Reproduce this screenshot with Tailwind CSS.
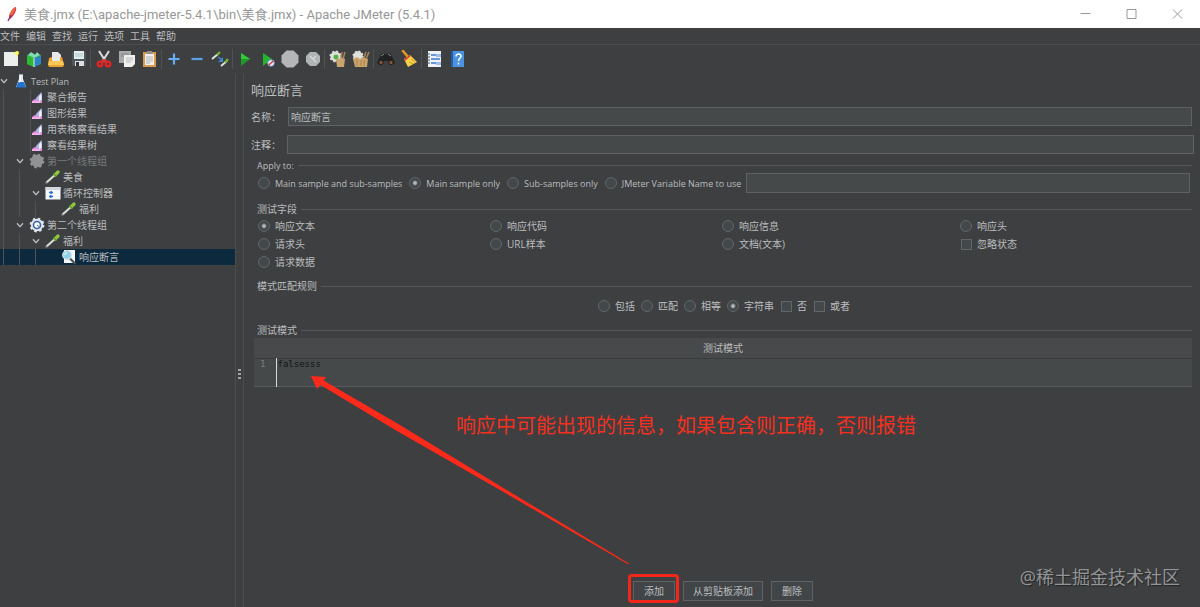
<!DOCTYPE html>
<html lang="zh">
<head>
<meta charset="utf-8">
<title>美食.jmx - Apache JMeter (5.4.1)</title>
<script src="https://cdn.jsdelivr.net/npm/@tailwindcss/browser@4"></script>
</head>
<body class="bg-[#3d3f41]">
<svg class="hidden">
  <symbol id="chev" viewBox="0 0 8 8"><path d="M1 2.2 4 5.6 7 2.2" fill="none" stroke="#b4b7b9" stroke-width="1.4"/></symbol>
  <symbol id="chart" viewBox="0 0 16 16"><path d="M1.5 0v16" stroke="#505355"/><path d="M3 14v-2l3-2 3-1 4-3v8z" fill="#e58fdc"/><path d="M7 9 12.500 3v8L9 13z" fill="#a9b6ec"/><path d="M10 8l2.500-4v7L10 12z" fill="#eef4ff"/><path d="M3 12.500h8V14H3z" fill="#fbb5ee"/></symbol>
  <symbol id="flask" viewBox="0 0 16 16"><path d="M6 2h4v4l3 8H3l3-8z" fill="#dfe9f2"/><path d="M5.2 9h5.6L13 14.5H3z" fill="#2173cf"/><path d="M7 3h1v5l-2 2z" fill="#fff"/><path d="M6 1.5h4" stroke="#9aabbb"/></symbol>
  <symbol id="gear" viewBox="0 0 16 16"><circle cx="8" cy="8" r="6.2" fill="currentColor" stroke="currentColor" stroke-width="2.4" stroke-dasharray="2.4 2.47"/><circle cx="8" cy="8" r="5.8" fill="currentColor"/></symbol>
  <symbol id="pipette" viewBox="0 0 16 16"><path d="M1.500 13.500 9.500 6.500" stroke="#848c86" stroke-width="2.400" stroke-linecap="round"/><path d="M2 13 9.500 6.300" stroke="#eef1ea" stroke-width="1.300"/><path d="M10 6 13 3" stroke="#8cc63a" stroke-width="3.400" stroke-linecap="round"/><path d="M8.500 4.500l3 3" stroke="#5d8a38" stroke-width="1"/></symbol>
  <symbol id="loop" viewBox="0 0 16 16"><path d="M.5 2h15v12.500H.5z" fill="#f5f7fa"/><path d="M.5 2h15v3H.5z" fill="#d3d8de"/><path d="M4 7.500h4M4 11.500h4" stroke="#2671d8" stroke-width="1.500"/><path d="M7 5.800v3.500L4 7.500zM5 9.700v3.500l3-1.700z" fill="#2671d8"/></symbol>
  <symbol id="assert" viewBox="0 0 16 16"><path d="M3 1h11v13H3z" fill="#f4f7fa"/><path d="M9 9.500 14.500 15" stroke="#4b5157" stroke-width="2.200"/><circle cx="6" cy="6" r="4.300" fill="#8fd2e6" stroke="#d4dde3" stroke-width="1.200"/><path d="M3.800 6a2.400 2.400 0 0 1 2-2.400" stroke="#fff" fill="none"/></symbol>
</svg>
<div class="relative flex min-h-screen flex-col overflow-hidden bg-[#3d3f41] font-['Open_Sans','Noto_Sans_CJK_SC',sans-serif] text-[10px] leading-none text-[#bbbdbf]">

  <header class="flex h-[28px] items-center bg-white text-[#979797]">
    <svg class="ml-1 h-4 w-4" viewBox="0 0 16 16"><path d="M12 1c1 3-2 9-6 12l-1-1C5 8 8 2 12 1z" fill="#d22a4c"/><path d="M12 1c-1 4-3 8-6.500 11.500L5 10C6 6 9 2 12 1z" fill="#f0683c"/><path d="M7 9 4 15" stroke="#7d2a74" stroke-width="1.200"/></svg>
    <h1 class="ml-1 flex-1 font-['Roboto','Noto_Sans_CJK_SC',sans-serif] text-[13px] whitespace-pre">美食.jmx (E:\apache-jmeter-5.4.1\bin\美食.jmx) - Apache JMeter (5.4.1)</h1>
    <button class="flex w-[46px] justify-center" aria-label="Minimize"><svg class="h-[11px] w-[11px]" viewBox="0 0 11 11"><path d="M.5 4.500h10" stroke="#999"/></svg></button>
    <button class="flex w-[46px] justify-center" aria-label="Maximize"><svg class="h-[11px] w-[11px]" viewBox="0 0 11 11"><path d="M1 .5h9v9H1z" fill="none" stroke="#999"/></svg></button>
    <button class="flex w-[46px] justify-center" aria-label="Close"><svg class="h-[11px] w-[11px]" viewBox="0 0 11 11"><path d="M1 .5l9 9M10 .5l-9 9" stroke="#999"/></svg></button>
  </header>

  <nav class="flex h-[17px] items-center gap-[6px] border-b border-[#4a4c4e]">
    <button>文件</button><button>编辑</button><button>查找</button><button>运行</button><button>选项</button><button>工具</button><button>帮助</button>
  </nav>

  <div class="flex h-[28px] shrink-0 items-center" role="toolbar">
    <div class="flex h-5 w-[91px] items-center border-r border-[#4f5254]">
      <button class="flex flex-1 justify-center" aria-label="New"><svg class="h-[18px] w-[18px]" viewBox="0 0 18 18"><path d="M2 2h14v14H2z" fill="#eceded"/><path d="M11 2h5v5z" fill="#f3f08a"/><circle cx="15" cy="3" r="2" fill="#fbf75a"/></svg></button>
      <button class="flex flex-1 justify-center" aria-label="Templates"><svg class="h-[18px] w-[18px]" viewBox="0 0 18 18"><path d="M2 5l6-1.500L16 5v9l-7 3-7-3z" fill="#38a83c"/><path d="M9 8l7-2v8l-7 3z" fill="#2b84c8"/><path d="M2 5l7 3v9l-7-3z" fill="#2fba35"/><path d="M3 5 6 2l4 3 2-3 3 3-6 3z" fill="#86dbbf"/><path d="M9 8v9" stroke="#d8f4e4"/></svg></button>
      <button class="flex flex-1 justify-center" aria-label="Open"><svg class="h-[18px] w-[18px]" viewBox="0 0 18 18"><path d="M5 2h6l3 3v7H5z" fill="#e8e8e6"/><path d="M2 8l3-1v4h8V7h2l2 8-1 2H2l-1-2z" fill="#e9a22e"/><path d="M2 11h14l1 4H1z" fill="#fac654"/></svg></button>
      <button class="flex flex-1 justify-center" aria-label="Save"><svg class="h-[18px] w-[18px]" viewBox="0 0 18 18"><path d="M2 2h14v14H3l-1-1z" fill="#4d555d"/><path d="M4 1h10v8H4z" fill="#e5ecec"/><path d="M5 4h8M5 6h8" stroke="#a9c6c9"/><path d="M5 11h9v5H5z" fill="#dedfe0"/><path d="M6 12h3v4H6z" fill="#30363b"/></svg></button>
    </div>
    <div class="flex h-5 w-[71px] items-center border-r border-[#4f5254] pl-[1px]">
      <button class="flex flex-1 justify-center" aria-label="Cut"><svg class="h-[18px] w-[18px]" viewBox="0 0 18 18"><path d="M4 1l7 11M14 1 7 12" stroke="#dcdfe1" stroke-width="2"/><circle cx="5" cy="14" r="2.300" fill="none" stroke="#e02424" stroke-width="2.400"/><circle cx="13" cy="14" r="2.300" fill="none" stroke="#e02424" stroke-width="2.400"/><path d="M6 12l3-2 3 2" stroke="#e02424" stroke-width="2" fill="none"/></svg></button>
      <button class="flex flex-1 justify-center" aria-label="Copy"><svg class="h-[18px] w-[18px]" viewBox="0 0 18 18"><path d="M1 1h12v12H1z" fill="#a7aaaa"/><path d="M3 4h8M3 6h4" stroke="#85898b"/><path d="M6 5h11v9l-3 3H6z" fill="#efefee"/><path d="M8 8h7M8 10h7M8 12h5" stroke="#b8bbbc"/></svg></button>
      <button class="flex flex-1 justify-center" aria-label="Paste"><svg class="h-[18px] w-[18px]" viewBox="0 0 18 18"><path d="M2 2h13v15H2z" fill="#d89a4c"/><path d="M4 4h9v11H4z" fill="#f1f0ec"/><path d="M6 1h5v3H6z" fill="#8d9296"/><path d="M5 7h7M5 9h7M5 11h7M5 13h4" stroke="#aeb3b6"/></svg></button>
    </div>
    <div class="flex h-5 w-[71px] items-center border-r border-[#4f5254]">
      <button class="flex flex-1 justify-center" aria-label="Expand all"><svg class="h-[18px] w-[18px]" viewBox="0 0 18 18"><path d="M9 3.500v11M3.500 9h11" stroke="#67adf4" stroke-width="2.200"/></svg></button>
      <button class="flex flex-1 justify-center" aria-label="Collapse all"><svg class="h-[18px] w-[18px]" viewBox="0 0 18 18"><path d="M3.500 9h11" stroke="#5b9fe6" stroke-width="2.200"/></svg></button>
      <button class="flex flex-1 justify-center" aria-label="Toggle"><svg class="h-[18px] w-[18px]" viewBox="0 0 18 18"><path d="M1 9 7 4M10 16l6-5" stroke="#dce2dc" stroke-width="2"/><path d="M6 5l3-3M14 12.500l3-3.500" stroke="#76b72c" stroke-width="2.200"/><path d="M7 7l4 3" stroke="#3f87cf" stroke-width="1.500"/><path d="M12 7v5H7z" fill="#3f87cf"/></svg></button>
    </div>
    <div class="flex h-5 w-[92px] items-center border-r border-[#4f5254] pl-[1px]">
      <button class="flex flex-1 justify-center" aria-label="Start"><svg class="h-[18px] w-[18px]" viewBox="0 0 18 18"><path d="M5 3l9 6-9 7z" fill="#1b9c28"/><path d="M5 3l9 6H5z" fill="#35c63b"/></svg></button>
      <button class="flex flex-1 justify-center" aria-label="Start no pauses"><svg class="h-[18px] w-[18px]" viewBox="0 0 18 18"><path d="M4 3l9 6-9 7z" fill="#23b52e"/><circle cx="12" cy="13" r="3.300" fill="#eef1f8" stroke="#6f8fc8"/><path d="M9.800 15l4.400-4" stroke="#d1333c" stroke-width="1.500"/></svg></button>
      <button class="flex flex-1 justify-center" aria-label="Stop"><svg class="h-[18px] w-[18px]" viewBox="0 0 18 18"><path d="M5.500.500h7l5 5v7l-5 5h-7l-5-5v-7z" fill="#b4b6b7"/></svg></button>
      <button class="flex flex-1 justify-center" aria-label="Shutdown"><svg class="h-[18px] w-[18px]" viewBox="0 0 18 18"><path d="M6 2h6l4 4v6l-4 4H6l-4-4V6z" fill="#b1b4b4"/><path d="M6 6l6 6M12 6l-3 3" stroke="#d6d8d8" stroke-width="1.500"/></svg></button>
    </div>
    <div class="flex h-5 w-[49px] items-center border-r border-[#4f5254] pl-[1px]">
      <button class="flex flex-1 justify-center" aria-label="Clear"><svg class="h-[18px] w-[18px] text-[#dfe0dc]" viewBox="0 0 18 18"><use href="#gear" x="0" y="0" width="13" height="13"/><circle cx="7" cy="7" r="2.500" fill="#58b04b"/><path d="M7 9h4l2-2 3 2-1 8H8z" fill="#c8a46e"/><path d="M12 8l1-6M14 9l2-7" stroke="#a88654" stroke-width="1.500"/></svg></button>
      <button class="flex flex-1 justify-center" aria-label="Clear all"><svg class="h-[18px] w-[18px] text-[#dfe0dc]" viewBox="0 0 18 18"><use href="#gear" x="0" y="0" width="12" height="12"/><path d="M1 9l4-2 3 2 3-2 5 2-1 8H3z" fill="#cba36a"/><path d="M5 10v6M9 10v6M12 10v6" stroke="#a98450"/><path d="M12 8l2-6M14 9l3-7" stroke="#a88654" stroke-width="1.500"/></svg></button>
    </div>
    <div class="flex h-5 w-[48px] items-center border-r border-[#4f5254]">
      <button class="flex flex-1 justify-center" aria-label="Search"><svg class="h-[18px] w-[18px]" viewBox="0 0 18 18"><path d="M4 4l3-1 2 2 2-2 3 1 4 9-3 2-4-4H7l-4 4-3-2z" fill="#1f2123"/><circle cx="4" cy="12.500" r="2.200" fill="#8c5238" stroke="#1f2123"/><circle cx="14" cy="12.500" r="2.200" fill="#8c5238" stroke="#1f2123"/><path d="M4 6l3-2M11 4l3 2" stroke="#8b8f92"/></svg></button>
      <button class="flex flex-1 justify-center" aria-label="Reset search"><svg class="h-[18px] w-[18px]" viewBox="0 0 18 18"><path d="M3 1l5 6" stroke="#e19a25" stroke-width="2.600" stroke-linecap="round"/><path d="M4 9l6-4 7 7-9 5z" fill="#f6d14a"/><path d="M4 9l6-4 1 1-6 5z" fill="#d8452d"/><path d="M9 12l4 2M11 9l4 3" stroke="#c99a26"/></svg></button>
    </div>
    <div class="flex h-5 w-[46px] items-center pl-[1px]">
      <button class="flex flex-1 justify-center" aria-label="Functions"><svg class="h-[18px] w-[18px]" viewBox="0 0 18 18"><path d="M3 1h13v16H3z" fill="#eef2f7"/><path d="M6 5h9M6 9h9M6 13h9" stroke="#3e78c9" stroke-width="1.500"/><path d="M11 4h5v3h-5zM11 12h5v3h-5z" fill="#9dbde8"/><path d="M1 4h4M1 7h4M1 10h4M1 13h4" stroke="#52575b"/></svg></button>
      <button class="flex flex-1 justify-center" aria-label="Help"><svg class="h-[18px] w-[18px]" viewBox="0 0 18 18"><path d="M3 1h13v16H3z" fill="#4b93e0"/><path d="M3 1h2v16H3z" fill="#235fa5"/><path d="M8 6.500c0-3.500 5.500-3 5 0-.300 1.800-2.500 2-2.500 4.500M10.500 12.500v2" stroke="#fff" stroke-width="1.500" fill="none"/></svg></button>
    </div>
  </div>

  <div class="flex flex-1 items-stretch">
    <aside class="w-[236px] shrink-0 border-r border-[#4a4c4e]">
      <ul role="tree" class="[&>li]:flex [&>li]:h-4 [&>li]:items-center [&_i]:ml-[3px] [&_i]:h-4 [&_i]:w-[13px] [&_i]:shrink-0 [&_i]:border-l [&_i]:border-[#505355] [&_b]:w-2 [&_span]:ml-[2px]">
        <li role="treeitem"><svg class="h-2 w-2"><use href="#chev"/></svg><svg class="ml-[5px] h-4 w-4"><use href="#flask"/></svg><span class="text-[9px]">Test Plan</span></li>
        <li role="treeitem"><i></i><b></b><svg class="ml-[5px] h-4 w-4"><use href="#chart"/></svg><span>聚合报告</span></li>
        <li role="treeitem"><i></i><b></b><svg class="ml-[5px] h-4 w-4"><use href="#chart"/></svg><span>图形结果</span></li>
        <li role="treeitem"><i></i><b></b><svg class="ml-[5px] h-4 w-4"><use href="#chart"/></svg><span>用表格察看结果</span></li>
        <li role="treeitem"><i></i><b></b><svg class="ml-[5px] h-4 w-4"><use href="#chart"/></svg><span>察看结果树</span></li>
        <li role="treeitem"><i></i><svg class="h-2 w-2"><use href="#chev"/></svg><svg class="ml-[5px] h-4 w-4 text-[#909293]"><use href="#gear"/></svg><span class="text-[#777a7c]">第一个线程组</span></li>
        <li role="treeitem"><i></i><i></i><b></b><svg class="ml-[5px] h-4 w-4"><use href="#pipette"/></svg><span>美食</span></li>
        <li role="treeitem"><i></i><i></i><svg class="h-2 w-2"><use href="#chev"/></svg><svg class="ml-[5px] h-4 w-4"><use href="#loop"/></svg><span>循环控制器</span></li>
        <li role="treeitem"><i></i><i></i><i></i><b></b><svg class="ml-[5px] h-4 w-4"><use href="#pipette"/></svg><span>福利</span></li>
        <li role="treeitem"><i></i><svg class="h-2 w-2"><use href="#chev"/></svg><svg class="ml-[5px] h-4 w-4 text-[#dfe5ec]" viewBox="0 0 16 16"><use href="#gear"/><circle cx="8" cy="8" r="3.500" fill="#fff" stroke="#3e64a8" stroke-width="1.600"/><path d="M8 8l2.500 2" stroke="#3e64a8"/></svg><span>第二个线程组</span></li>
        <li role="treeitem"><i></i><i></i><svg class="h-2 w-2"><use href="#chev"/></svg><svg class="ml-[5px] h-4 w-4"><use href="#pipette"/></svg><span>福利</span></li>
        <li role="treeitem" aria-selected="true" class="bg-[#0d293e]"><i></i><i></i><i></i><b></b><svg class="ml-[5px] h-4 w-4"><use href="#assert"/></svg><span>响应断言</span></li>
      </ul>
    </aside>
    <div class="flex w-2 shrink-0 items-center justify-center border-r border-[#4a4c4e] pt-[68px]" role="separator">
      <svg class="h-3 w-[3px]" viewBox="0 0 3 12"><path d="M0 1h3v2H0zM0 5h3v2H0zM0 9h3v2H0z" fill="#a2a4a6"/></svg>
    </div>

    <main class="flex min-w-0 flex-1 flex-col pr-2 pl-[7px] [&_input[type=checkbox]]:h-[11px] [&_input[type=checkbox]]:w-[11px] [&_input[type=checkbox]]:appearance-none [&_input[type=checkbox]]:border [&_input[type=checkbox]]:border-[#626668] [&_input[type=checkbox]]:bg-[#43494a] [&_input[type=radio]]:h-3 [&_input[type=radio]]:w-3 [&_input[type=radio]]:appearance-none [&_input[type=radio]]:rounded-full [&_input[type=radio]]:border [&_input[type=radio]]:border-[#626668] [&_input[type=radio]]:bg-[#43494a] [&_input:checked]:bg-[radial-gradient(circle,#b8babc_1px,#43494a_3px)] [&_label]:flex [&_label]:items-center [&_label]:gap-[5px] [&_label]:whitespace-nowrap">
      <h2 class="flex h-[34px] items-center text-[13px]">响应断言</h2>
      <div class="flex h-[19px] items-center">
        <label for="name" class="w-[37px]">名称：</label>
        <input id="name" type="text" value="响应断言" class="h-[19px] min-w-0 flex-1 border border-[#5f6264] bg-[#45494a] px-[2px]">
      </div>
      <div class="-mr-[2px] mt-[9px] flex h-[19px] items-center">
        <label for="comment" class="w-[36px]">注释：</label>
        <input id="comment" type="text" class="h-[19px] min-w-0 flex-1 border border-[#5f6264] bg-[#45494a] px-[2px]">
      </div>

      <section class="mt-1">
        <h3 class="flex h-[14px] items-center gap-1 pl-[6px] text-[9px]">Apply to:<span class="h-px flex-1 bg-[#55585a]"></span></h3>
        <div class="mt-px flex h-5 items-center gap-[7px] pr-[2px] pl-[7px] text-[9px]">
          <label><input type="radio" name="scope">Main sample and sub-samples</label>
          <label><input type="radio" name="scope" checked>Main sample only</label>
          <label><input type="radio" name="scope">Sub-samples only</label>
          <label><input type="radio" name="scope">JMeter Variable Name to use</label>
          <input type="text" aria-label="JMeter Variable Name" class="-ml-[2px] h-5 min-w-0 flex-1 border border-[#5f6264] bg-[#45494a]">
        </div>
      </section>

      <section class="mt-[9px]">
        <h3 class="flex h-[14px] items-center gap-1 pl-[6px]">测试字段<span class="h-px flex-1 bg-[#55585a]"></span></h3>
        <div class="mt-px grid auto-rows-[18px] grid-cols-[232fr_232fr_238fr_232fr] pl-[7px]">
          <label><input type="radio" name="field" checked>响应文本</label>
          <label><input type="radio" name="field">响应代码</label>
          <label><input type="radio" name="field">响应信息</label>
          <label><input type="radio" name="field">响应头</label>
          <label><input type="radio" name="field">请求头</label>
          <label><input type="radio" name="field">URL样本</label>
          <label><input type="radio" name="field">文档(文本)</label>
          <label class="pl-px"><input type="checkbox">忽略状态</label>
          <label><input type="radio" name="field">请求数据</label>
        </div>
      </section>

      <section class="mt-2">
        <h3 class="flex h-[14px] items-center gap-1 pl-[6px]">模式匹配规则<span class="h-px flex-1 bg-[#55585a]"></span></h3>
        <div class="mt-1 flex h-[18px] items-center justify-center gap-[6px] pl-[5px]">
          <label><input type="radio" name="rule">包括</label>
          <label><input type="radio" name="rule">匹配</label>
          <label><input type="radio" name="rule">相等</label>
          <label><input type="radio" name="rule" checked>字符串</label>
          <label class="ml-px"><input type="checkbox">否</label>
          <label class="ml-px"><input type="checkbox">或者</label>
        </div>
      </section>

      <section class="mt-2">
        <h3 class="flex h-[14px] items-center gap-1 pl-[6px]">测试模式<span class="h-px flex-1 bg-[#55585a]"></span></h3>
        <div class="mt-px pl-[3px]">
          <table class="w-full border-collapse">
            <thead><tr class="h-5 border-b border-[#393c3d] bg-[#47494b]"><th colspan="2" class="p-0 font-normal">测试模式</th></tr></thead>
            <tbody><tr class="h-7 border-b border-[#585c5d] bg-[#45494a] align-top font-['DejaVu_Sans_Mono',monospace] text-[9px]">
              <td class="w-[22px] border-r border-[#d5d7d8] p-0 pt-px pl-[6px] text-[#7a7e80]">1</td>
              <td class="p-0 pt-px pl-px text-[#141516]">falsesss</td>
            </tr></tbody>
          </table>
        </div>
      </section>

      <div class="mt-auto flex justify-center gap-2 pb-[6px] pl-[3px]">
        <div class="relative">
          <button class="h-5 border border-[#5e6264] bg-[#414547] px-[10px]">添加</button>
          <div class="absolute -top-[7px] -right-[4px] -bottom-[2px] -left-[5px] rounded-[4px] border-3 border-[#f3261b]"></div>
        </div>
        <button class="h-5 border border-[#5e6264] bg-[#414547] px-[9px]">从剪贴板添加</button>
        <button class="h-5 border border-[#5e6264] bg-[#414547] px-[10px]">删除</button>
      </div>
    </main>
  </div>

  <svg class="pointer-events-none absolute top-[374px] left-[310px] h-[192px] w-[320px]" viewBox="310 374 320 192"><path d="M311 376 326 377 323.500 380.500 400 425 520 498 629 563.500 628.500 564.500 519 501 397 431 320.500 385 317 389z" fill="#fb2a1a"/></svg>
  <p class="pointer-events-none absolute top-[416px] left-[456px] text-[20px] whitespace-nowrap text-[#f6301f]">响应中可能出现的信息，如果包含则正确，否则报错</p>
  <p class="pointer-events-none absolute right-[20px] bottom-[21px] text-[18px] text-[#929496] [text-shadow:1px_1px_1px_#222]">@稀土掘金技术社区</p>
</div>
</body>
</html>
